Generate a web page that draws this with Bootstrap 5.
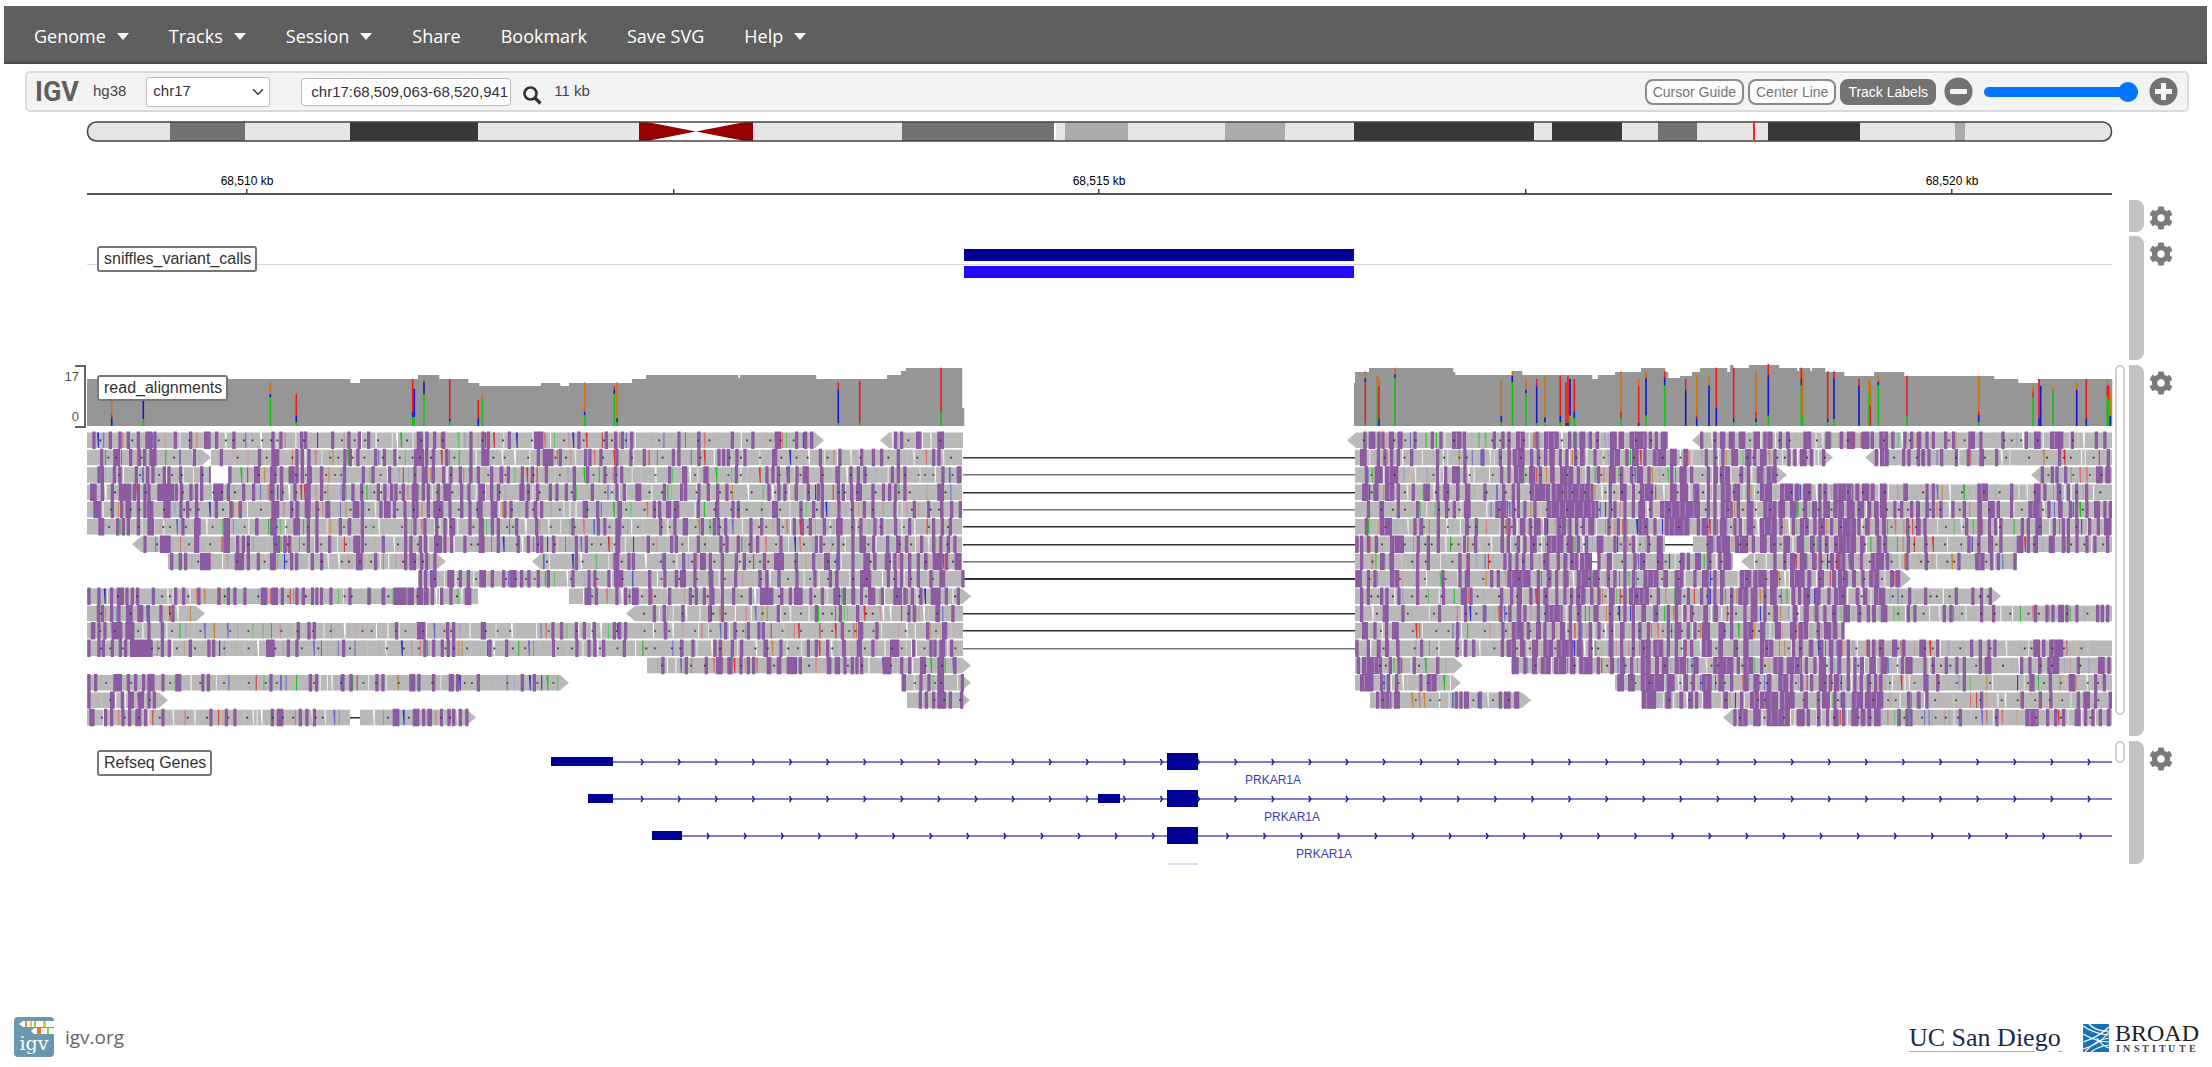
<!DOCTYPE html>
<html lang="en">
<head>
<meta charset="utf-8">
<meta name="viewport" content="width=device-width, initial-scale=1">
<title>IGV - Integrative Genomics Viewer</title>
<link href="https://cdn.jsdelivr.net/npm/bootstrap@5.3.0/dist/css/bootstrap.min.css" rel="stylesheet">
<style>
body{font-family:"Liberation Sans",Arial,sans-serif;color:#333;background:#fff;overflow-x:hidden}
.app-nav{background:#5f5f5f;margin:6px 5px 0 4px;height:58px;border-bottom:2px solid #4a4a4a;padding:3px 10px 0;font-family:"Open Sans","Noto Sans",sans-serif}
.app-nav .navbar-nav .nav-link{color:#fff;font-size:18px;line-height:28px;padding:0 20px;white-space:nowrap}
.app-nav .dropdown-toggle::after{border-top:7px solid;border-left:6px solid transparent;border-right:6px solid transparent;margin-left:11px;vertical-align:3px}
.igv-bar{margin:7px 23px 0 25px;height:41px;background:#f3f3f3;border:2px solid #dadada;border-radius:5px;padding:0 9px 0 8px;font-size:15px;color:#444}
.igv-word{font:700 27px/36px Roboto,sans-serif;color:#5f5f5f}
.igv-bar .genome-name{margin-left:14px}
.igv-bar .chr-select{width:124px;height:30px;padding:0 24px 0 6px;font-size:15px;color:#333;border:1px solid #bbb;border-radius:3px;background-position:right 5px center;background-size:12px 12px;margin-left:20px}
.igv-bar .locus{width:210px;height:28px;padding:0 0 0 9px;font-size:15px;color:#333;border:1px solid #bbb;border-radius:4px;margin-left:31px}
.igv-bar .span-size{margin-left:12px}
.pill{height:26px;padding:0 6px;font-size:14px;line-height:22px;border:2px solid #8a8a8a;border-radius:8px;background:#fbfbfb;color:#777}
.pill.on{background:#737373;border-color:#737373;color:#fff}
.icon-btn{border:0;background:none;padding:0;line-height:0}
.zoom-range{-webkit-appearance:none;appearance:none;width:154px;height:20px;background:none;margin:0 11px}
.zoom-range::-webkit-slider-runnable-track{height:10px;border-radius:5px;background:#0076ff}
.zoom-range::-webkit-slider-thumb{-webkit-appearance:none;width:20px;height:20px;margin-top:-5px;border-radius:50%;background:#0076ff}
.axis-col{flex:0 0 87px}
.side-col{flex:0 0 100px}
.view-col{min-width:0;position:relative}
.view-col svg{display:block;width:100%;height:100%;overflow:visible}
.row-ideo{height:21px;margin-top:9px}
.row-ruler{height:54px}
.row-blank{height:32px;margin-top:4px}
.row-variant{height:124px;margin-top:4px}
.row-align{height:371px;margin-top:5px}
.row-gene{height:123px;margin-top:5px}
.scroll-slot{width:17px;padding-left:3px}
.scroll-thumb{width:10px;border:2px solid #d0d0d0;border-radius:6px;background:#fff}
.thumb-long{height:350px}
.thumb-short{height:22px}
.grip{width:15px;background:#c3c3c3;border-radius:0 8px 8px 0}
.gear{margin:5px 0 0 5px}
.track-tag{position:absolute;left:10px;top:10px;height:26px;padding:0 4px 0 5px;font-size:16px;line-height:22px;border:2px solid #777;border-radius:3px;background:#fff;color:#333}
.row-gene .track-tag{top:9px}
.app-foot{padding:0 10px 9px 13px}
.foot-link{font:19px/26px "Open Sans","Noto Sans",sans-serif;color:#666}
.foot-link span{margin-left:2px}
</style>
<script src="https://cdn.jsdelivr.net/npm/bootstrap@5.3.0/dist/js/bootstrap.bundle.min.js"></script>
</head>
<body class="d-flex flex-column min-vh-100">
<svg width="0" height="0" class="position-absolute" aria-hidden="true">
<symbol id="cog" viewBox="0 0 512 512"><path fill="#7b7b7b" d="M487.400 315.700l-42.600-24.600c4.300-23.200 4.300-47 0-70.200l42.600-24.600c4.900-2.800 7.100-8.600 5.500-14-11.100-35.600-30-67.800-54.700-94.600-3.800-4.100-10-5.100-14.800-2.300L380.800 110c-17.900-15.400-38.500-27.300-60.800-35.100V25.800c0-5.600-3.900-10.500-9.400-11.700-36.700-8.200-74.300-7.800-109.200 0-5.500 1.200-9.400 6.100-9.400 11.700V75c-22.200 7.900-42.800 19.800-60.800 35.100L88.700 85.500c-4.900-2.800-11-1.900-14.800 2.300-24.700 26.700-43.600 58.900-54.700 94.600-1.700 5.400.6 11.200 5.500 14L67.300 221c-4.300 23.200-4.300 47 0 70.200l-42.600 24.600c-4.900 2.800-7.100 8.600-5.500 14 11.100 35.600 30 67.800 54.700 94.600 3.800 4.100 10 5.100 14.800 2.300l42.600-24.600c17.900 15.400 38.500 27.300 60.800 35.100v49.200c0 5.600 3.900 10.500 9.400 11.700 36.700 8.200 74.300 7.800 109.200 0 5.500-1.200 9.400-6.100 9.400-11.700v-49.200c22.200-7.900 42.800-19.800 60.800-35.100l42.600 24.600c4.900 2.800 11 1.900 14.800-2.300 24.700-26.700 43.600-58.900 54.700-94.600 1.500-5.500-.7-11.300-5.600-14.100zM256 336c-44.100 0-80-35.900-80-80s35.900-80 80-80 80 35.900 80 80-35.900 80-80 80z"/></symbol>
</svg>

<nav class="app-nav navbar navbar-expand d-flex align-items-center">
  <ul class="navbar-nav">
    <li class="nav-item dropdown"><a class="nav-link dropdown-toggle" href="#" role="button" data-bs-toggle="dropdown">Genome</a></li>
    <li class="nav-item dropdown"><a class="nav-link dropdown-toggle" href="#" role="button" data-bs-toggle="dropdown">Tracks</a></li>
    <li class="nav-item dropdown"><a class="nav-link dropdown-toggle" href="#" role="button" data-bs-toggle="dropdown">Session</a></li>
    <li class="nav-item"><a class="nav-link" href="#">Share</a></li>
    <li class="nav-item"><a class="nav-link" href="#">Bookmark</a></li>
    <li class="nav-item"><a class="nav-link" href="#">Save SVG</a></li>
    <li class="nav-item dropdown"><a class="nav-link dropdown-toggle" href="#" role="button" data-bs-toggle="dropdown">Help</a></li>
  </ul>
</nav>

<div class="igv-bar d-flex align-items-center">
  <span class="igv-word">IGV</span>
  <label class="genome-name" for="chr">hg38</label>
  <select id="chr" class="form-select chr-select"><option>chr17</option></select>
  <input class="form-control locus" type="text" aria-label="Locus" value="chr17:68,509,063-68,520,941">
  <button class="icon-btn ms-2 mt-2" type="button" aria-label="Search"><svg class="ms-1" width="19" height="19" viewBox="0 0 19 19"><circle cx="7.500" cy="7.500" r="6" fill="none" stroke="#333" stroke-width="2.600"/><path d="M12 12l5.500 5.500" stroke="#333" stroke-width="3.200"/></svg></button>
  <span class="span-size">11 kb</span>
  <div class="d-flex align-items-center ms-auto">
    <button class="pill me-1" type="button">Cursor Guide</button>
    <button class="pill me-1" type="button">Center Line</button>
    <button class="pill on" type="button">Track Labels</button>
    <button class="icon-btn ms-2" type="button" aria-label="Zoom out"><svg width="29" height="29" viewBox="0 0 29 29"><circle cx="14.500" cy="14.500" r="14" fill="#737373"/><rect x="6" y="12" width="17" height="5" rx="1" fill="#f3f3f3"/></svg></button>
    <input class="zoom-range" type="range" min="0" max="100" value="100" aria-label="Zoom">
    <button class="icon-btn" type="button" aria-label="Zoom in"><svg width="29" height="29" viewBox="0 0 29 29"><circle cx="14.500" cy="14.500" r="14" fill="#737373"/><path d="M6 12h6V6h5v6h6v5h-6v6h-5v-6H6z" fill="#f3f3f3"/></svg></button>
  </div>
</div>

<main class="flex-grow-1">
  <div class="d-flex row-ideo"><div class="axis-col"></div><div class="view-col flex-grow-1"><svg id="ideo"></svg></div><div class="side-col"></div></div>
  <div class="d-flex row-ruler"><div class="axis-col"></div><div class="view-col flex-grow-1"><svg id="ruler"></svg></div><div class="side-col"></div></div>
  <div class="d-flex row-blank"><div class="axis-col"></div><div class="view-col flex-grow-1"></div>
    <div class="side-col d-flex"><div class="scroll-slot"></div><div class="grip"></div><div class="gear"><button class="icon-btn" type="button" aria-label="Ruler settings"><svg width="24" height="24"><use href="#cog"/></svg></button></div></div></div>
  <div class="d-flex row-variant"><div class="axis-col"></div><div class="view-col flex-grow-1"><svg id="variant"></svg><div class="track-tag">sniffles_variant_calls</div></div>
    <div class="side-col d-flex"><div class="scroll-slot"></div><div class="grip"></div><div class="gear"><button class="icon-btn" type="button" aria-label="Variant track settings"><svg width="24" height="24"><use href="#cog"/></svg></button></div></div></div>
  <div class="d-flex row-align"><div class="axis-col"><svg width="87" height="64" class="d-block"><path d="M75 1H85V62H75" fill="none" stroke="#666" stroke-width="2"/><g font-family="Liberation Sans" font-size="13" fill="#555" text-anchor="end"><text x="79" y="16">17</text><text x="79" y="56">0</text></g></svg></div><div class="view-col flex-grow-1"><svg id="align"></svg><div class="track-tag">read_alignments</div></div>
    <div class="side-col d-flex"><div class="scroll-slot"><div class="scroll-thumb thumb-long"></div></div><div class="grip"></div><div class="gear"><button class="icon-btn" type="button" aria-label="Alignment track settings"><svg width="24" height="24"><use href="#cog"/></svg></button></div></div></div>
  <div class="d-flex row-gene"><div class="axis-col"></div><div class="view-col flex-grow-1"><svg id="gene"></svg><div class="track-tag">Refseq Genes</div></div>
    <div class="side-col d-flex"><div class="scroll-slot"><div class="scroll-thumb thumb-short"></div></div><div class="grip"></div><div class="gear"><button class="icon-btn" type="button" aria-label="Gene track settings"><svg width="24" height="24"><use href="#cog"/></svg></button></div></div></div>
</main>

<footer class="app-foot d-flex justify-content-between align-items-end">
  <a href="#" class="foot-link text-decoration-none d-flex align-items-center">
    <svg class="me-2" width="42" height="42" viewBox="0 0 42 42"><rect x="1" y="1" width="40" height="40" rx="4" fill="#6a98ae"/><path d="M41 5H10l-4 3 4 3h31z" fill="#fff"/><path d="M41 12H21l-3 3 3 3h20z" fill="#fff"/><path d="M12 5h2v6h-2z" fill="#f08060"/><path d="M17 5h2v6h-2zM30 5h3v6h-3z" fill="#f5c030"/><path d="M21 5h2v6h-2zM34 12h2v6h-2z" fill="#90c850"/><path d="M24 12h4v6h-4z" fill="#f07028"/><text x="21" y="34" text-anchor="middle" font-family="DejaVu Serif" font-size="19" fill="#fff">igv</text></svg>
    <span>igv.org</span></a>
  <div class="d-flex align-items-end">
    <svg width="164" height="43" viewBox="0 0 164 43" role="img"><text x="0" y="31" font-family="Liberation Serif" font-size="26" fill="#182b49">UC San Diego</text><path d="M0 36.500H126M149 36.500H154" stroke="#d8a34a" stroke-width="1"/></svg>
    <svg class="ms-2" width="121" height="43" viewBox="0 0 121 43" role="img"><g><path d="M2 9h26v28H2z" fill="#1773b4"/><path d="M2 11q12 8 26 9M2 19q14 8 26 8M2 27q14-4 26-15M2 34q16-4 26-17M4 37q10-12 24-14M10 37q8-6 18-7M8 9q8 8 20 7M16 23q5 8 12 10" stroke="#fff" stroke-width="1.200" fill="none"/></g><text x="34" y="26" font-family="Liberation Serif" font-size="24" fill="#222">BROAD</text><text x="35 42 53 61 71 78 87 98 108" y="37" font-family="Liberation Serif" font-size="10" font-weight="700" fill="#444">INSTITUTE</text></svg>
  </div>
</footer>

<script>
// Track data is in genome-view units: 0..2025 spans the visible locus.
const SPAN = 2025, LEFT = 87;
const $ = id => document.getElementById(id);
let k = 1;
const X = v => +((v - LEFT) * k).toFixed(1);
const rect = (a, y, b, h, f) => `<rect x="${X(a)}" y="${y}" width="${+((b - a) * k).toFixed(1)}" height="${h}" fill="${f}"/>`;

function ideogram(W){
  const D='#383838',M='#727272',L='#ababab';
  const bands=[[170,245,M],[350,478,D],[902,1055,M],[1065,1128,L],[1225,1285,L],[1354,1534,D],[1552,1622,D],[1658,1697,M],[1768,1860,D],[1955,1965,L]];
  let s=`<rect x="0" y="1" width="${W}" height="19" rx="9" fill="#e6e6e6"/>`;
  bands.forEach(b=>s+=rect(b[0],1,b[1],19,b[2]));
  s+=rect(1054,2,1056,17,'#fff')+rect(639,1,753,19,'#fff');
  s+=`<path d="M${X(639)} 1h8L${X(696)} 10.500L${X(639)+8} 20h-8zM${X(753)} 1h-8L${X(696)} 10.500L${X(753)-8} 20h8z" fill="#960000"/>`;
  s+=`<rect x="0.500" y="1" width="${W-1}" height="19" rx="9" fill="none" stroke="#444" stroke-width="1.500"/>`;
  s+=rect(1753,1,1755,19,'#f22');
  $('ideo').innerHTML=s;
}
function ruler(W){
  let s=`<rect x="0" y="51" width="${W}" height="2" fill="#555"/>`;
  [[247,'68,510 kb'],[674,''],[1099,'68,515 kb'],[1526,''],[1952,'68,520 kb']].forEach(t=>{
    s+=`<rect x="${X(t[0])-1}" y="47" width="1.500" height="5" fill="#444"/>`;
    if(t[1]) s+=`<text x="${X(t[0])}" y="43" text-anchor="middle" font-family="Liberation Sans" font-size="12" fill="#000">${t[1]}</text>`;
  });
  $('ruler').innerHTML=s;
}
function variants(W){
  $('variant').innerHTML=`<rect x="0" y="28" width="${W}" height="1" fill="#d8d8d8"/>`+rect(964,13,1354,12,'#000096')+rect(964,30,1354,12,'#2209ff');
}
function genes(){
  let s='';
  const T=[{y:21,ex:[[551,613]],a:642,l:1273},{y:58,ex:[[588,613],[1098,1120]],a:642,l:1292},{y:95,ex:[[652,682]],a:708,l:1324}];
  T.forEach(t=>{
    s+=rect(t.ex[0][0],t.y-1,2112,2,'#7d7dcd');
    let d='';
    for(let x=t.a;x<2108;x+=37.1) d+=`M${X(x)-1} ${t.y-3}l2 3l-2 3`;
    s+=`<path d="${d}" fill="none" stroke="#1a1aa0" stroke-width="1.400"/>`;
    t.ex.forEach(e=>s+=rect(e[0],t.y-5,e[1],9,'#000096'));
    s+=rect(1167,t.y-9,1198,17,'#000096');
    s+=`<text x="${X(t.l)}" y="${t.y+22}" text-anchor="middle" font-family="Liberation Sans" font-size="12" fill="#3c3cb4">PRKAR1A</text>`;
  });
  s+=rect(1167,122,1198,2,'#dcdcf0');
  $('gene').innerHTML=s;
}

// Coverage profile: start, end, depth top
const COV='87 350 380,350 360 384,360 418 380,418 439 376,439 468 380,468 479 384,479 541 387,541 560 384,560 569 387,569 632 384,632 646 380,646 738 376,738 740 379,740 816 376,816 887 380,887 901 376,901 906 372,906 962 369,962 964 409,1354 1355 384,1355 1369 373,1369 1453 369,1453 1455 373,1455 1512 376,1512 1522 372,1522 1592 376,1592 1598 380,1598 1615 376,1615 1641 373,1641 1665 369,1665 1668 373,1668 1680 379,1680 1692 377,1692 1700 373,1700 1727 369,1727 1730 373,1730 1733 366,1733 1749 369,1749 1779 366,1779 1797 369,1797 1799 372,1799 1810 369,1810 1812 372,1812 1825 369,1825 1844 373,1844 1874 377,1874 1904 373,1904 1994 377,1994 2018 380,2018 2038 384,2038 2112 380'.split(',').map(s=>s.split(' ').map(Number));
// Mismatch stacks per quarter of the view: position then base colour + top
const OFF=[60,540,1330,1750];
const SNP=['155 o155 r198 b208,250 b154 g210,631 o100 b135 g145,709 r135 b200 g220,1058 r90 b188 g205,1063 b120 g205,1092 o90 b98 g135,1169 r90 b210 g218,1255 r152 b208,1267 o135 g152',
'134 o100 b188 g198,223 r112 b122 g135,231 o100 b208 g220,895 r100 b122 g222,959 o90 r98 g222,1203 r56 g188',
'106 o67 b88 r100 g222,142 o78 g112,147 o88 r110 b210,195 o56 b76 g88,514 o90 b200 g220,547 o67 b80 g100,588 o90 b122 g133,620 r90 b112 g222,645 o80 b205 g220,691 r80 b200 g220,708 r100 b222,714 r80 b222,720 b90 g200,733 r90 b188 g208,873 o67 r188 g208,926 o88 r110 b222,948 o67 b88 g200,1004 r67 b88 g110,1067 r90 b122,1100 o78 r200 b208,1137 o78 b110,1159 r56 b178,1211 r56 b208 g220,1278 o67 r188 b208 g220,1315 r45 b78 g200',
'154 r56 b90 g110,158 o67 g200,233 r67 b210 g220,252 r67 b88 g210,327 r90 b110,357 o90 g130,361 o100 r170,385 o78 b98 g110,471 r80 g200,686 o80 r188 b198 g220,849 o112 r130 g145,867 r90 b208,872 b110 b200,909 o112 g124,980 o100 b122,1009 r90 b210,1072 o90 r110 g140,1076 r110 g150,1081 o130 b200'];
const BASE={o:'#d1710a',r:'#f01818',b:'#1414c8',g:'#12c412'};
// Reads per row: start-end, "<" or ">" for strand arrow; "=" is a deletion line
const READS=['87-824> 880-963< 1347-1668< 1692-2112<','87-211> 211-962 963=1355 1355-1833> 1865-2112<','87-211 228-962 963=1355 1355-1787> 2031-2112<','87-962 963=1355 1355-2112','87-962 963=1355 1355-2112','87-962 963=1355 1355-2112','132-962< 963=1355 1355-1665 1665=1693 1693-2112','168-446> 532-962< 963=1355 1355-1592 1592=1598 1598-1733 1741-2017<','418-963 963=1355 1355-1911>','87-478 569-971> 1355-2001>','87-205> 626-963< 963=1355 1355-2112','87-963 963=1355 1355-1844','87-963 963=1355 1355-2112','647-971> 1355-1463> 1511-2112','87-569> 901-971> 1355-1461> 1615-2112','87-168> 907-970> 1370-1531> 1641-2112','87-350 350=360 360-476> 1723-2112<'];
// Insertions per row, per quarter: position[:width]
const INS=[
`97,146,175,200,230,256:20,280,341,387,432:20,465,517,634,658,720,732,813,862,893,921,1070:18,1096,1119,1146,1228,1264,1280,1343,1422:18
120,160:20,207,233,249,268:22,398,479,594,634:24,706,722,742,850,866,889,942,968,1000,1062:30,1095,1115,1155,1228,1264:24,1430
112,122,158,175,224,258,274,308,322,357,420,447:5,505,582:18,630,640,660,686:18,706,722,740:16,780,848,905,934,984,1060,1085:18,1115,1146,1168,1196,1228,1250,1290,1320,1340,1382,1412
90:20,122,152,176:38,218,230,250,262,292:50,344,360,388,405,420,460:20,480,500,546,576,628:16,660,700,734:18,780,845,874,900,950,970,990,1003,1025,1055:20,1085,1100,1130,1150:24,1200,1222,1255:20,1290,1310,1378:16,1400,1428
100:24,152,180,196:18,230,250,262:18,310:22,358,378,405,464,508,536,634:24,690,706,734:18,766,796:15,878:20,902,958,972:20,998,1030,1055,1066,1100,1120:30,1165,1200,1225,1250:18,1292:20,1330,1348,1396,1422
115:18,168,185,200,230,262:20,364,402:20,490,500,586,630:20,700:20,740,766,836,864,902,1032,1060,1090,1125,1150,1168:18,1225,1256:16,1292,1310,1365,1425
250,300:32,402:16,490:20,528,545,560,640:20,670,684,740,766,804,880:20,902,965,1032,1048,1076,1092,1122:24,1150,1170,1210,1256:18,1310,1370,1400,1428
330,356,372,420:32,524:28,560,590,630:18,690,705,752,780,888:20,942,1032,1048:20,1080,1095,1120
1076,1092,1110:20,1162:20,1196,1220,1258:20,1292,1326,1348:22,1380,1402,1430
82,112,150,170:22,196,212,228,275,342,366,412,472,500,520,550,602:20,634:20,662,706,725,752,766,780,808,865,922,966,1000:40,1042:20,1070:20,1092:14,1112,1140,1168,1214:20
110,122,150,172,198:20,232:18,260,298,334
92:14,112,130,155:32,196,205:18,262,302,710,742,758,1005,1070:26,1158,1176,1262:16
82,112,125,152,176,192,210:68,302,323,386,442,456,618:26,680,706,846,1090,1116,1142,1160,1176,1285,1335

82,102,160:26,200,222,246,262:22,304,346:18,424,440,628,746,765,844,868,946,964,1048:18,1072,1116,1166:16,1188,1250,1382,1418
82,150:14,182,204:18,234:18,262,278
88:16,132,150,184,204,226:18,252,304,448,494,520,632,650:20,716,736,758,998:20,1058:20,1086,1102:14,1140,1162,1176,1196,1216`,
`0,112,194,222,242,270,412,472,572,634,704,714,765,792,810,1062,1080,1128:16,1192:20
8:32,56,132,145,178,226,268,308,395,412,472,532,546,560,586,610,696:16,836,895,960,995,1020,1070,1176,1192
14,98,138,190,222,240,384,426:16,490:16,584,676,694,710,740,766,788:18,840,886:14,928,950,970,1052,1070,1090,1204,1250:14
26,46,74,98,152,226,248,286:18,368,420,432,472,500,528,556,682,712,730,764,800,830,842,890,905,930,948:18,994,1026,1044,1062,1090,1192:20
0,128:16,168,232:14,338,354,378:16,400:18,470,528,574,590,696:18,778,816,842,892,932,968,994,1060,1118,1160,1200,1230,1256
94,170,190,226:18,357,400,428:16,482,518,530,552,628,660,710,758,782,806,848,888:20,934,958,1000,1020,1062,1104,1176,1202,1226
0,36,104,134,226:16,320,390,404,470,538,556,590,628,648,718,824,838,890,934,958:20,996,1038,1068:14,1095,1140,1176,1198,1220,1240
104,220:18,262,275,368,426,460,480:18,506,542,584,608,668,702:30,764,816,852:18,890,934,970:20,1000,1034:18,1060,1080,1104,1130,1152,1178:30,1215,1244:20
20,94,142,160,202,222:28,324,370,404,420:18,460,506:14,542,582,655,676,712,766,820,866,886,934,960:34,1040,1062,1080,1104,1130,1168,1198:18,1264
134:20,164,226,252,276:20,325,384,446,464,488,508:16,542,576,626,660:40,720,746,762:26,808,842,880:20,908,936,960,984:22,1022,1060:26,1090,1112,1138,1172:30,1214,1250
338,368,424,504,542,710,824,896,948,1102,1118,1186:14,1234
34,60,104,128,158,218,234,252,372,552,580,620,652,665,902,954:16,1006,1158,1206:16
36,106,142,160,186,248,420,454,520,536,572,600,670:14,718,800,824,858,906,950:16,994,1050:28,1116,1168,1180,1198:18,1230
364,434,494,528:20,562:16,598,620,636,680:14,710:14,740:30,776,860:14,884:16,910,932,946,960,1028:26,1080,1104,1140:18,1192:20,1240
1086:12,1138,1162,1192:20,1262
1136,1154,1176,1192:26,1226,1260
`,
`100,116:20,142,154,176:16,204:14,250,302,328,366:28,398,488,514,532,558:26,616,642:44,714,730,748:18,776,798,840:20,866:16,900:50,956,974,992:20,1110,1150,1170:16,1196:18,1226:20,1270:20,1300,1312:16,1346,1368
90:20,140,160,180,200,240,318,400,454,506,532,548:36,600,620,642,658:16,686,706,732,750:14,790,840:30,886,906:20,940,968:40,1020:20,1060:14,1124,1150,1174,1204:20,1246:18,1270,1290:20,1330,1372
104,134:24,165:40,318,342,366:24,400,510,532,552:30,596:20,626,660:14,690,700:30,740,770,800,836:20,870,900,920:20,952,1020,1050:20,1080,1130,1150:14,1170:30,1230,1250,1280:20,1310:30
96:20,130:16,165:28,200,245,280:20,318,340:18,378,405:16,460,516,545,560,600:60,665:125,836,870:20,905,930:40,1020:20,1050:24,1090:18,1130,1150,1172:30,1210:20,1250,1290:36,1350:30
110,148:14,200,258,320,345,368,402:20,496:38,545,560,580,610,650:155,836,850,880,905,925:20,958,990:120,1130,1150,1172:36,1220,1250:20,1300:40,1345:20
104,150:36,250,268:12,320,405:12,434,512,532,548,570:16,596,612:20,642,680:28,715,735,755,775:18,832,860,880,925:30,970,1004:74,1100,1115:20,1150,1170:20,1210,1226,1250:20,1290:50,1348
76:10,90,110,134,180:42,260,290,320,398,432,512,530,560,580,600:20,650:50,710:20,740,765,800:20,850,880,905,950,980:18,1130:20,1160:40,1215:40,1265,1290:20,1320:20,1360:20
90,150:14,178:14,258,290,385,410,520,535,556,576,600,640:18,680,700,720:25,750:36,802,830:16,880,910,930:16,980:20,1050:14,1070,1095:18,1130:14,1165,1180:24,1330,1360
76:20,110,130,180:28,258,334,385,404:16,480,500,532:70,620,650:14,675,700:16,740:45,788:20,830,850,880,905,940:46,1000:14,1034:26,1090,1116:20,1150,1170:14,1230:34,1270:40,1320:24
90,110,150,166,202,258,336,392:20,418,510,540,560:16,598,620,640:16,676,700,720,738:26,780,802,836:18,880,897:60,980,1034:20,1070,1110,1130,1150,1170,1200,1225:30,1262:20,1300,1320:20
90,158:18,214,324,402,458,508,535,560:14,580,620,644:54,716,740:14,790:16,836:14,880,905,934:14,970:14,1010,1034,1060,1080,1120:14,1150:14,1200,1240,1262:20,1300,1330:14
96:18,130,165,186:20,378,514,545:36,590,618:16,640,665,690:16,716,745,776,802,836:14,870:14,905,925,950,1010,1034:20,1070,1090,1116:24,1165:18,1200,1240:30,1290:16,1335:18
76:10,110,140:12,165:12,198,270,376,402,426,512,530:28,570:16,606:18,640:30,680:50,740:18,775:12,836:14,870,905,932:30,970:30,1010,1034,1060,1080,1115:30,1165:14,1210:14,1240:16,1290:40
80,96:60,176,202,248,318,546:20,580,606:16,632:30,672:36,720:16,748:40,800,840,870:16,900,932:30,975:12,995:20,1034:34,1090:16,1150:60,1220,1240:30,1290,1330:30,1370
90:40,150,170,195,268,290:30,862:20,894:20,932:70,1010:24,1060:14,1085,1115:30,1165:18,1200,1240:16,1270:18,1310:14,1345:30
138,152:32,192:18,374,388,402:16,446,506,522:20,552:16,936:42,1006:18,1048:12,1075:14,1095,1120:24,1180:14,1230,1260:26,1290:54,1350:30
1210,1225:28,1270:22,1310:70`,
`160:24,226:16,270,290:24,336:22,362,388:26,424,460,480,502:12,526,545,582,606,655:20,688,754,824,852:20,900:40,962,1034,1060
130,150:20,180,216,374,390:26,456,472,500,515,532,570,614,650,688:14,735,924,1070
872,902,916,942,1038:20,1066:16
120,134:14,160:24,205,220:12,250:60,316:12,336:22,362:12,390:20,460:14,526,545,682:32,780,852:20,880,920:14,950,975,1005
120:20,160:12,186:14,205,220:20,250:30,290:24,322:20,352:12,372:14,390:20,430,450,480,498,526,545,568,604,638,682:14,714:20,740,780,835:40,892,924:14,956,975,1006,1032:18,1060,1076
125,150:26,190,205:20,240,264:54,322,345:14,375:12,396:12,468,498:14,520,645,682:16,714,732,748,812,830,856:20,908,935,950,976,1014,1040,1062:22
140:22,180:14,205,224:12,252:66,330:14,380:14,400:12,470,522,652,682,714:16,748,800:20,830,850:14,896:18,935,950,976,1006,1030,1068
120:16,150:20,186:14,206,240:12,260:26,300:12,330,362:40,408,466,524,622,676:28,720,740,790:10
120:44,172:12,204:18,246:12,264:28,306:12,334,358:30,420,436:16
124:12,144,160:20,194:18,232,252:36,318,338:14,372:34,474,522,614,664,690,716
128:14,162:14,194:12,220,246:14,280:20,322:12,350,366:12,392:20,470,490,578,598,690,726,852,886,904,924:18,946,976,1038,1052,1068
120:20,146:28,200,222:22,248:14,274:10
126,146:12,176:14,206:14,236:14,262:14,290,350,366:10,386:16,426:16,456,508:20,558,660,686,712,730,850:20,876,898:42
120:36,164,190,206:22,240,262:12,290,310,330:12,358:20,392:20,452,466:22,520:10,545,584,616,638,686,704:20,810,835,864,892:36,980,1044:20,1072
120:10,150:10,180,206:24,236,252:16,290,310,330,350:12,372,388,520:16,558,638,838:16,896,956:20,1032,1058
120:14,160:14,200,216:24,250,276,305:34,345:20,366:34,472,500:12,526,690,812,866,898,980,1000:20,1032,1076
140:24,170,200:12,228:10,250:16,276,304:22,332:14,352:12,372:20,442,466,478,626,736,826:40,888,912,936,974:18,1002,1024,1046:10,1070:12`].map(q=>q.split('\n'));

function alignments(){
  let seed=7; const rnd=()=>(seed=(seed*16807)%2147483647)/2147483647;
  let s='';
  COV.forEach(c=>s+=rect(c[0],c[2]-366,c[1]+0.3,427-c[2],'#969696'));
  SNP.forEach((q,i)=>q.split(',').forEach(e=>{
    const p=e.split(' '), x=OFF[i]+p[0]/3;
    for(let j=1;j<p.length;j++){
      const t=+p[j].slice(1), b=j+1<p.length?+p[j+1].slice(1):231;
      s+=rect(x-.8,+(t/3-16).toFixed(1),x+.8,+((b-t)/3).toFixed(1),BASE[p[j][0]]);
    }
  }));
  const tints=['#e8e8e8','#f6f6f6','#d2c4b4','#c0b0b0','#fff','#c89a9a','#a8bca8','#a4a4c8','#e07070','#6a6ad0','#58c858','#c8863c','#e03030','#3030cc','#20c020'];
  const tp={}, add=(c,d)=>tp[c]=(tp[c]||'')+d;
  let gray='',purple='',dots='',slits='';
  READS.forEach((r,i)=>{
    const y=+(67.500+i*17.33).toFixed(1), h=15.5;
    r.split(' ').forEach(seg=>{
      const m=seg.match(/(\d+)([-=])(\d+)([<>]?)/), a=+m[1], b=+m[3];
      if(m[2]==='='){ s+=rect(a,Math.round(y+7),b,i===8?2:1.500,[2,4,7,12].includes(i)?'#777':'#333'); return; }
      const xa=X(a), xb=X(b), mid=y+h/2;
      if(m[4]==='>') gray+=`M${xa} ${y}H${xb-9}L${xb} ${mid}L${xb-9} ${y+h}H${xa}z`;
      else if(m[4]==='<') gray+=`M${xb} ${y}H${xa+9}L${xa} ${mid}L${xa+9} ${y+h}H${xb}z`;
      else gray+=`M${xa} ${y}H${xb}V${y+h}H${xa}z`;
      for(let x=a+10+rnd()*8;x<b-10;){
        const c=tints[Math.floor(Math.pow(rnd(),1.4)*tints.length)];
        add(c,`M${X(x)} ${y}h${rnd()<.3?2:1}v${h}h-1z`);
        x+=3+rnd()*((x>1500&&x<1900)?7:15);
      }
      for(let x=a+12+rnd()*20;x<b-8;x+=6+rnd()*34) dots+=`M${X(x)} ${mid-.7}h1.800v1.600h-1.800z`;
    });
    INS.forEach((q,n)=>(q[i]||'').split(',').filter(Boolean).forEach(e=>{
      const p=e.split(':').map(Number), x=OFF[n]+p[0]/3, w=(p[1]||10)/3;
      purple+=`M${X(x)} ${y-1}h${(w*k).toFixed(1)}v17.400h-${(w*k).toFixed(1)}z`;
      if(n>1&&w>8) for(let v=x+4;v<x+w-2;v+=4+rnd()*7) slits+=`M${X(v)} ${y}h1v${h}h-1z`;
    }));
  });
  s+=`<path d="${gray}" fill="#b9b9b9"/>`;
  for(const c in tp) s+=`<path d="${tp[c]}" fill="${c}"/>`;
  s+=`<path d="${purple}" fill="#8c5ba2"/><path d="${slits}" fill="#c9b6d3" fill-opacity=".5"/><path d="${dots}" fill="#333"/>`;
  $('align').innerHTML=s;
}
function draw(){
  const W=$('ideo').parentNode.clientWidth;
  k=W/SPAN;
  ideogram(W); ruler(W); variants(W); alignments(); genes();
}
draw();
addEventListener('resize',draw);
</script>
</body>
</html>
